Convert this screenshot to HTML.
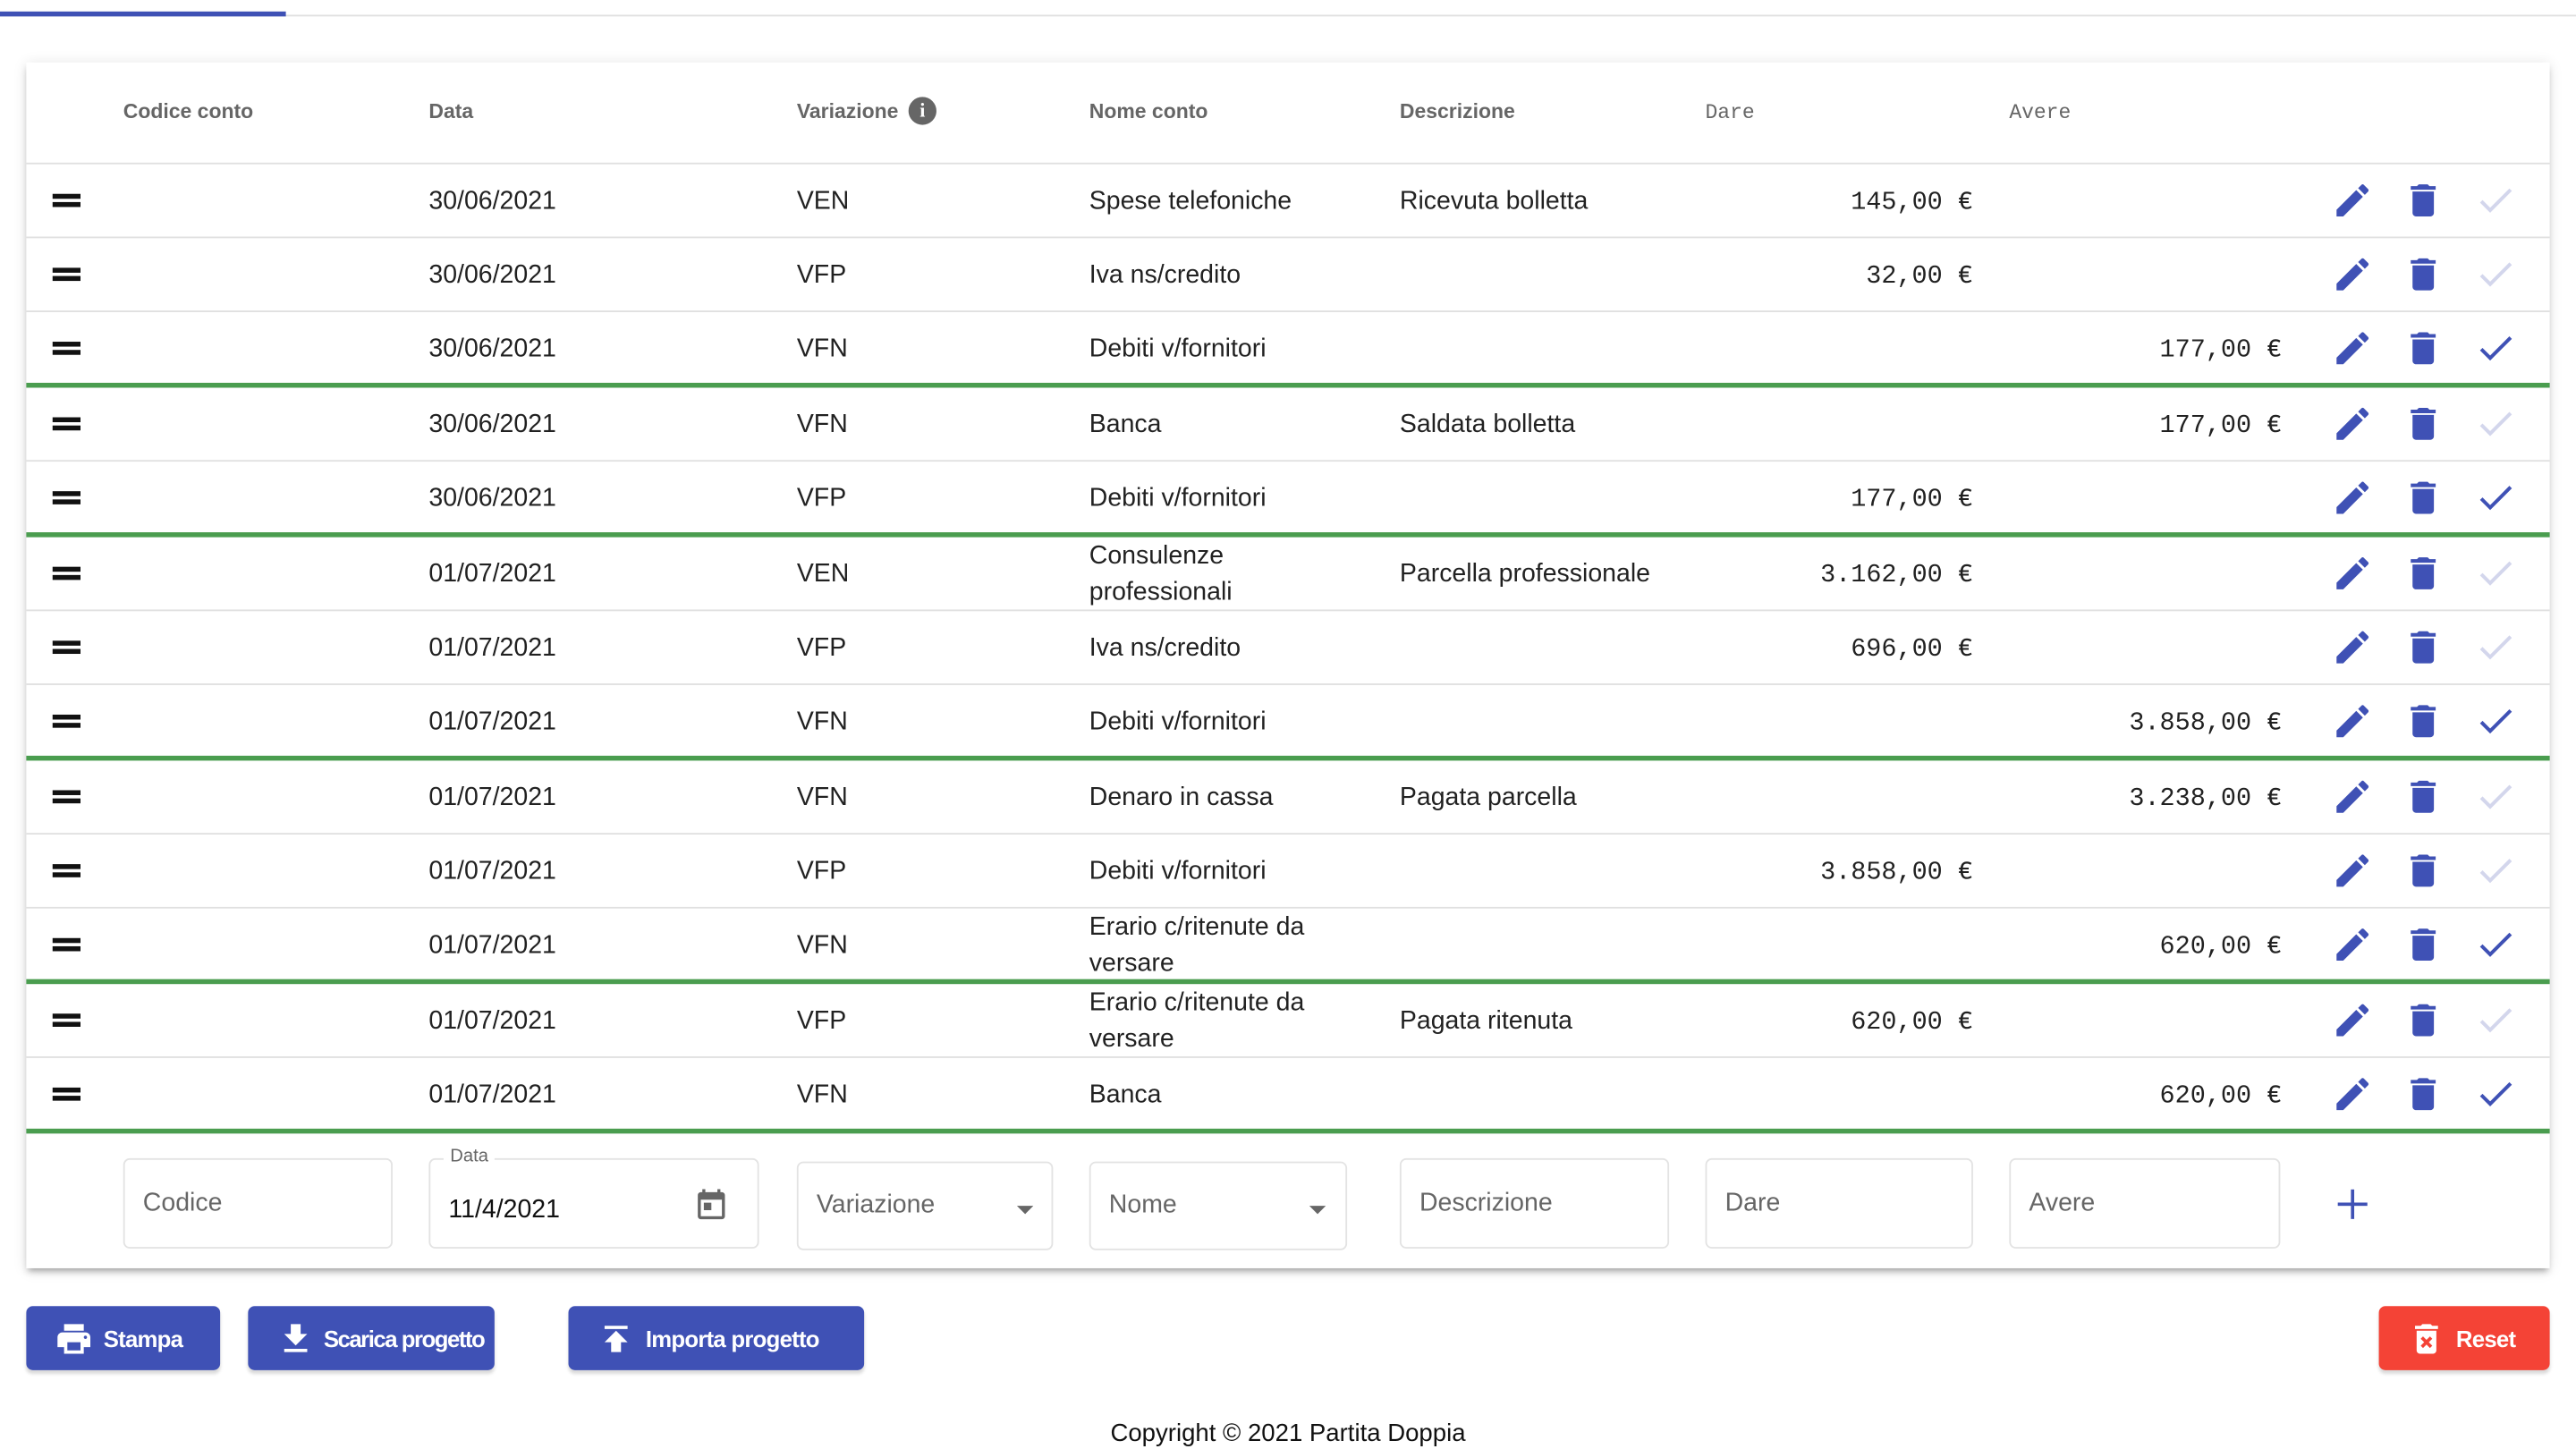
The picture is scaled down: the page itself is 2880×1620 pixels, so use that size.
<!DOCTYPE html>
<html><head><meta charset="utf-8">
<style>
html,body{margin:0;padding:0;background:#fff;width:2880px;height:1620px;overflow:hidden}
#w{position:absolute;left:0;top:0;width:1568px;height:882px;transform:scale(1.836735);transform-origin:0 0;font-family:"Liberation Sans",sans-serif;color:rgba(0,0,0,.87)}
.a{position:absolute}
.card{left:16px;top:38px;width:1536px;height:734px;background:#fff;box-shadow:0 3px 3px -2px rgba(0,0,0,.2),0 3px 4px 0 rgba(0,0,0,.14),0 1px 8px 0 rgba(0,0,0,.12)}
.hd{font-size:12.5px;color:#666;font-weight:bold;top:61px}
.mono{font-family:"Liberation Mono",monospace}
.row{position:absolute;left:16px;width:1536px;border-bottom:1px solid #e0e0e0}
.row.g{border-bottom:3px solid #4a9d4f}
.row span{position:absolute;top:50%;transform:translateY(-50%);font-size:15.5px;white-space:nowrap;margin-top:1px}
.row .h{left:16px;width:17px;height:8px;border-top:3px solid #111;border-bottom:3px solid #111;box-sizing:border-box;transform:translateY(-50%);margin-top:0}
.row .amt{font-family:"Liberation Mono",monospace;font-size:15.5px;text-align:right}
.row svg{position:absolute;top:50%;transform:translateY(-50%)}
.inp{position:absolute;border:1px solid #e3e3e3;border-radius:4px;box-sizing:border-box;font-size:15.5px;color:#666}
.inp span{position:absolute;left:11px;top:50%;transform:translateY(-50%)}
.btn{position:absolute;top:795px;height:39px;border-radius:4px;background:#3f51b5;color:#fff;font-weight:bold;font-size:14px;letter-spacing:-0.4px;box-shadow:0 2px 2px rgba(0,0,0,.15);white-space:nowrap}
.btn span{position:absolute;top:50%;transform:translateY(-50%);white-space:nowrap}
.btn svg{position:absolute;top:50%;transform:translateY(-50%)}
</style></head><body><div id="w">
<div class="a" style="left:0;top:9px;width:1568px;height:1px;background:#e0e0e0"></div>
<div class="a" style="left:0;top:7px;width:174px;height:3px;background:#3f51b5"></div>
<div class="a card"></div>
<div class="a hd" style="left:75px">Codice conto</div>
<div class="a hd" style="left:261px">Data</div>
<div class="a hd" style="left:485px">Variazione</div>
<div class="a" style="left:553px;top:59px;width:17px;height:17px;border-radius:50%;background:#666;color:#fff;font-size:12px;font-weight:bold;text-align:center;line-height:17px;font-family:'Liberation Serif',serif">i</div>
<div class="a hd" style="left:663px">Nome conto</div>
<div class="a hd" style="left:852px">Descrizione</div>
<div class="a hd mono" style="left:1038px;font-weight:normal;top:62px">Dare</div>
<div class="a hd mono" style="left:1223px;font-weight:normal;top:62px">Avere</div>
<div class="a" style="left:16px;top:99px;width:1536px;height:1px;background:#e0e0e0"></div>

<svg width="0" height="0" style="position:absolute"><defs>
<symbol id="ed" viewBox="0 0 24 24"><path fill="#3f51b5" d="M3 17.25V21h3.75L17.81 9.94l-3.75-3.75L3 17.25zM20.71 7.04c.39-.39.39-1.02 0-1.41l-2.34-2.34a.996.996 0 0 0-1.41 0l-1.83 1.83 3.75 3.75 1.83-1.83z"/></symbol>
<symbol id="dl" viewBox="0 0 24 24"><path fill="#3f51b5" d="M6 19c0 1.1.9 2 2 2h8c1.1 0 2-.9 2-2V7H6v12zM19 4h-3.5l-1-1h-5l-1 1H5v2h14V4z"/></symbol>
<symbol id="ck" viewBox="0 0 24 24"><path fill="none" stroke="currentColor" stroke-width="2" d="M4 12.5l5 5L20.5 6"/></symbol>
</defs></svg>

<div id="rows"></div>
<script>
var R=[
[100,44,'30/06/2021','VEN','Spese telefoniche','Ricevuta bolletta','145,00 €','',0,0],
[145,44,'30/06/2021','VFP','Iva ns/credito','','32,00 €','',0,0],
[190,43,'30/06/2021','VFN','Debiti v/fornitori','','','177,00 €',1,1],
[236,44,'30/06/2021','VFN','Banca','Saldata bolletta','','177,00 €',0,0],
[281,43,'30/06/2021','VFP','Debiti v/fornitori','','177,00 €','',1,1],
[327,44,'01/07/2021','VEN','Consulenze<br>professionali','Parcella professionale','3.162,00 €','',0,0],
[372,44,'01/07/2021','VFP','Iva ns/credito','','696,00 €','',0,0],
[417,43,'01/07/2021','VFN','Debiti v/fornitori','','','3.858,00 €',1,1],
[463,44,'01/07/2021','VFN','Denaro in cassa','Pagata parcella','','3.238,00 €',0,0],
[508,44,'01/07/2021','VFP','Debiti v/fornitori','','3.858,00 €','',0,0],
[553,43,'01/07/2021','VFN','Erario c/ritenute da<br>versare','','','620,00 €',1,1],
[599,44,'01/07/2021','VFP','Erario c/ritenute da<br>versare','Pagata ritenuta','620,00 €','',0,0],
[644,43,'01/07/2021','VFN','Banca','','','620,00 €',1,1]];
var h='';
R.forEach(function(r){
h+='<div class="row'+(r[8]?' g':'')+'" style="top:'+r[0]+'px;height:'+r[1]+'px">'+
'<span class="h"></span>'+
'<span style="left:245px">'+r[2]+'</span>'+
'<span style="left:469px">'+r[3]+'</span>'+
'<span style="left:647px;line-height:22px">'+r[4]+'</span>'+
'<span style="left:836px">'+r[5]+'</span>'+
'<span class="amt" style="right:351px">'+r[6]+'</span>'+
'<span class="amt" style="right:163px">'+r[7]+'</span>'+
'<svg style="left:1403px" width="26" height="26"><use href="#ed"/></svg>'+
'<svg style="left:1446px" width="26" height="26"><use href="#dl"/></svg>'+
'<svg style="left:1490px;color:'+(r[9]?'#3f51b5':'#d3d6ec')+'" width="26" height="26"><use href="#ck"/></svg>'+
'</div>';});
document.getElementById('rows').innerHTML=h;
</script>

<div class="inp" style="left:75px;top:705px;width:164px;height:55px"><span>Codice</span></div>
<div class="inp" style="left:261px;top:705px;width:201px;height:55px;color:#111"><span style="top:31px">11/4/2021</span>
<div class="a" style="left:8px;top:-8px;background:#fff;padding:0 4px;font-size:11px;color:#666">Data</div>
<svg class="a" style="left:160px;top:16px" width="22" height="22" viewBox="0 0 24 24"><path fill="#666" d="M19 4h-1V2h-2v2H8V2H6v2H5c-1.1 0-2 .9-2 2v14c0 1.1.9 2 2 2h14c1.1 0 2-.9 2-2V6c0-1.1-.9-2-2-2zm0 16H5V9h14v11zM7 11h5v5H7z"/></svg></div>
<div class="inp" style="left:485px;top:707px;width:156px;height:54px"><span>Variazione</span><div class="a" style="left:133px;top:26px;border:5px solid transparent;border-top:5px solid #666"></div></div>
<div class="inp" style="left:663px;top:707px;width:157px;height:54px"><span>Nome</span><div class="a" style="left:133px;top:26px;border:5px solid transparent;border-top:5px solid #666"></div></div>
<div class="inp" style="left:852px;top:705px;width:164px;height:55px"><span>Descrizione</span></div>
<div class="inp" style="left:1038px;top:705px;width:163px;height:55px"><span>Dare</span></div>
<div class="inp" style="left:1223px;top:705px;width:165px;height:55px"><span>Avere</span></div>
<div class="a" style="left:1431px;top:724px;width:2px;height:18px;background:#3f51b5"></div>
<div class="a" style="left:1423px;top:732px;width:18px;height:2px;background:#3f51b5"></div>

<div class="btn" style="left:16px;width:118px"><svg style="left:17px" width="24" height="24" viewBox="0 0 24 24"><path fill="#fff" d="M19 8H5c-1.66 0-3 1.34-3 3v6h4v4h12v-4h4v-6c0-1.66-1.34-3-3-3zm-3 11H8v-5h8v5zm3-7c-.55 0-1-.45-1-1s.45-1 1-1 1 .45 1 1-.45 1-1 1zm-1-9H6v4h12V3z"/></svg><span style="left:47px">Stampa</span></div>
<div class="btn" style="left:151px;width:150px"><svg style="left:17px" width="24" height="24" viewBox="0 0 24 24"><path fill="#fff" d="M19 9h-4V3H9v6H5l7 7 7-7zM5 18v2h14v-2H5z"/></svg><span style="left:46px;letter-spacing:-0.8px">Scarica progetto</span></div>
<div class="btn" style="left:346px;width:180px"><svg style="left:17px" width="24" height="24" viewBox="0 0 24 24"><path fill="#fff" d="M5 4v2h14V4H5zm0 10h4v6h6v-6h4l-7-7-7 7z"/></svg><span style="left:47px">Importa progetto</span></div>
<div class="btn" style="left:1448px;width:104px;background:#f44336"><svg style="left:17px" width="24" height="24" viewBox="0 0 24 24"><path fill="#fff" d="M6 19c0 1.1.9 2 2 2h8c1.1 0 2-.9 2-2V7H6v12zm2.46-7.12l1.41-1.41L12 12.59l2.12-2.12 1.41 1.41L13.41 14l2.12 2.12-1.41 1.41L12 15.41l-2.12 2.12-1.41-1.41L10.59 14l-2.13-2.12zM15.5 4l-1-1h-5l-1 1H5v2h14V4z"/></svg><span style="left:47px">Reset</span></div>

<div class="a" style="left:0;width:1568px;top:864px;text-align:center;font-size:15px;color:#111">Copyright © 2021 Partita Doppia</div>
</div></body></html>
